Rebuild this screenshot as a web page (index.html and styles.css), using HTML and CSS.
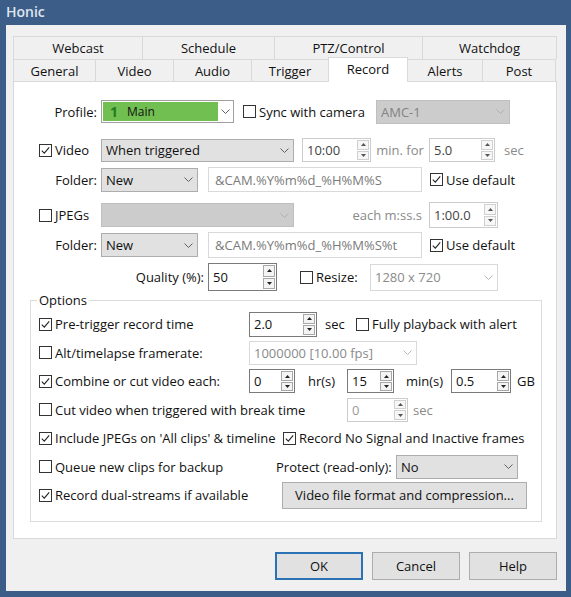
FILE: index.html
```html
<!DOCTYPE html>
<html>
<head>
<meta charset="utf-8">
<link rel="stylesheet" href="styles.css">
</head>
<body>
<div class="win">
  <div class="title">Honic</div>
  <div class="client">
    <div class="tabrow r1">
      <div class="tab t-webcast">Webcast</div>
      <div class="tab t-schedule">Schedule</div>
      <div class="tab t-ptz">PTZ/Control</div>
      <div class="tab t-watchdog last">Watchdog</div>
    </div>
    <div class="tabrow r2">
      <div class="tab t-general">General</div>
      <div class="tab t-video">Video</div>
      <div class="tab t-audio">Audio</div>
      <div class="tab t-trigger">Trigger</div>
      <div class="tab t-record sel">Record</div>
      <div class="tab t-alerts">Alerts</div>
      <div class="tab t-post last">Post</div>
    </div>
    <div class="panel">
      <div class="row r-profile">
        <div class="lab lab-top">Profile:</div>
        <div class="combo profile-combo">
          <span class="pc-fill"><span class="pc-num">1</span>Main</span>
          <span class="arr"><svg width="9" height="5" viewBox="0 0 9 5"><path d="M0.5 0.5 L4.5 4.5 L8.5 0.5" fill="none" stroke="#606060"/></svg></span>
        </div>
        <label class="chk sync"><span class="cb"></span>Sync with camera</label>
        <div class="combo dis-list amc"><span class="val">AMC-1</span><span class="arr"><svg width="9" height="5" viewBox="0 0 9 5"><path d="M0.5 0.5 L4.5 4.5 L8.5 0.5" fill="none" stroke="#b0b0b0"/></svg></span></div>
      </div>

      <div class="row r-video">
        <label class="chk lab-chk"><span class="cb"><svg width="11" height="11" viewBox="0 0 11 11"><path d="M1.8 5.6 L4.3 8.1 L9.2 2.4" fill="none" stroke="#222" stroke-width="1.1"/></svg></span>Video</label>
        <div class="combo list video-mode"><span class="val">When triggered</span><span class="arr"><svg width="9" height="5" viewBox="0 0 9 5"><path d="M0.5 0.5 L4.5 4.5 L8.5 0.5" fill="none" stroke="#606060"/></svg></span></div>
        <div class="spin spin-dis sp-time"><span class="val">10:00</span><span class="btns"><span class="sb"><svg width="5" height="3" viewBox="0 0 5 3"><polygon points="0,3 2.5,0 5,3" fill="#555"/></svg></span><span class="sb"><svg width="5" height="3" viewBox="0 0 5 3"><polygon points="0,0 5,0 2.5,3" fill="#555"/></svg></span></span></div>
        <span class="gray u-minfor">min. for</span>
        <div class="spin spin-dis sp-sec"><span class="val">5.0</span><span class="btns"><span class="sb"><svg width="5" height="3" viewBox="0 0 5 3"><polygon points="0,3 2.5,0 5,3" fill="#555"/></svg></span><span class="sb"><svg width="5" height="3" viewBox="0 0 5 3"><polygon points="0,0 5,0 2.5,3" fill="#555"/></svg></span></span></div>
        <span class="gray u-sec1">sec</span>
      </div>

      <div class="row r-folder1">
        <div class="lab lab-top">Folder:</div>
        <div class="combo list folder-combo"><span class="val">New</span><span class="arr"><svg width="9" height="5" viewBox="0 0 9 5"><path d="M0.5 0.5 L4.5 4.5 L8.5 0.5" fill="none" stroke="#606060"/></svg></span></div>
        <div class="field path">&amp;CAM.%Y%m%d_%H%M%S</div>
        <label class="chk usedef"><span class="cb"><svg width="11" height="11" viewBox="0 0 11 11"><path d="M1.8 5.6 L4.3 8.1 L9.2 2.4" fill="none" stroke="#222" stroke-width="1.1"/></svg></span>Use default</label>
      </div>

      <div class="row r-jpegs">
        <label class="chk lab-chk"><span class="cb"></span>JPEGs</label>
        <div class="combo dis-list jpeg-combo"><span class="val"></span><span class="arr"><svg width="9" height="5" viewBox="0 0 9 5"><path d="M0.5 0.5 L4.5 4.5 L8.5 0.5" fill="none" stroke="#b0b0b0"/></svg></span></div>
        <span class="gray u-each">each m:ss.s</span>
        <div class="spin spin-dis sp-each"><span class="val">1:00.0</span><span class="btns"><span class="sb"><svg width="5" height="3" viewBox="0 0 5 3"><polygon points="0,3 2.5,0 5,3" fill="#555"/></svg></span><span class="sb"><svg width="5" height="3" viewBox="0 0 5 3"><polygon points="0,0 5,0 2.5,3" fill="#555"/></svg></span></span></div>
      </div>

      <div class="row r-folder2">
        <div class="lab lab-top">Folder:</div>
        <div class="combo list folder-combo"><span class="val">New</span><span class="arr"><svg width="9" height="5" viewBox="0 0 9 5"><path d="M0.5 0.5 L4.5 4.5 L8.5 0.5" fill="none" stroke="#606060"/></svg></span></div>
        <div class="field path path2">&amp;CAM.%Y%m%d_%H%M%S%t</div>
        <label class="chk usedef"><span class="cb"><svg width="11" height="11" viewBox="0 0 11 11"><path d="M1.8 5.6 L4.3 8.1 L9.2 2.4" fill="none" stroke="#222" stroke-width="1.1"/></svg></span>Use default</label>
      </div>

      <div class="row r-quality">
        <div class="lab lab-quality">Quality (%):</div>
        <div class="spin sp-quality"><span class="val">50</span><span class="btns"><span class="sb"><svg width="5" height="3" viewBox="0 0 5 3"><polygon points="0,3 2.5,0 5,3" fill="#222"/></svg></span><span class="sb"><svg width="5" height="3" viewBox="0 0 5 3"><polygon points="0,0 5,0 2.5,3" fill="#222"/></svg></span></span></div>
        <label class="chk resize"><span class="cb"></span>Resize:</label>
        <div class="combo dis-edit resize-combo"><span class="val">1280 x 720</span><span class="arr"><svg width="9" height="5" viewBox="0 0 9 5"><path d="M0.5 0.5 L4.5 4.5 L8.5 0.5" fill="none" stroke="#b8b8b8"/></svg></span></div>
      </div>

      <fieldset class="group">
        <legend>Options</legend>
        <div class="grow g-first">
          <label class="chk gcell gc-218"><span class="cb"><svg width="11" height="11" viewBox="0 0 11 11"><path d="M1.8 5.6 L4.3 8.1 L9.2 2.4" fill="none" stroke="#222" stroke-width="1.1"/></svg></span>Pre-trigger record time</label>
          <div class="spin sp-pre"><span class="val">2.0</span><span class="btns"><span class="sb"><svg width="5" height="3" viewBox="0 0 5 3"><polygon points="0,3 2.5,0 5,3" fill="#222"/></svg></span><span class="sb"><svg width="5" height="3" viewBox="0 0 5 3"><polygon points="0,0 5,0 2.5,3" fill="#222"/></svg></span></span></div>
          <span class="u-presec">sec</span>
          <label class="chk"><span class="cb"></span>Fully playback with alert</label>
        </div>
        <div class="grow">
          <label class="chk gcell gc-218"><span class="cb"></span>Alt/timelapse framerate:</label>
          <div class="combo dis-edit alt-combo"><span class="val">1000000 [10.00 fps]</span><span class="arr"><svg width="9" height="5" viewBox="0 0 9 5"><path d="M0.5 0.5 L4.5 4.5 L8.5 0.5" fill="none" stroke="#b8b8b8"/></svg></span></div>
        </div>
        <div class="grow">
          <label class="chk gcell gc-218"><span class="cb"><svg width="11" height="11" viewBox="0 0 11 11"><path d="M1.8 5.6 L4.3 8.1 L9.2 2.4" fill="none" stroke="#222" stroke-width="1.1"/></svg></span>Combine or cut video each:</label>
          <div class="spin sp-hr"><span class="val">0</span><span class="btns"><span class="sb"><svg width="5" height="3" viewBox="0 0 5 3"><polygon points="0,3 2.5,0 5,3" fill="#222"/></svg></span><span class="sb"><svg width="5" height="3" viewBox="0 0 5 3"><polygon points="0,0 5,0 2.5,3" fill="#222"/></svg></span></span></div>
          <span class="u-hr">hr(s)</span>
          <div class="spin sp-min"><span class="val">15</span><span class="btns"><span class="sb"><svg width="5" height="3" viewBox="0 0 5 3"><polygon points="0,3 2.5,0 5,3" fill="#222"/></svg></span><span class="sb"><svg width="5" height="3" viewBox="0 0 5 3"><polygon points="0,0 5,0 2.5,3" fill="#222"/></svg></span></span></div>
          <span class="u-min">min(s)</span>
          <div class="spin sp-gb"><span class="val">0.5</span><span class="btns"><span class="sb"><svg width="5" height="3" viewBox="0 0 5 3"><polygon points="0,3 2.5,0 5,3" fill="#222"/></svg></span><span class="sb"><svg width="5" height="3" viewBox="0 0 5 3"><polygon points="0,0 5,0 2.5,3" fill="#222"/></svg></span></span></div>
          <span class="u-gb">GB</span>
        </div>
        <div class="grow">
          <label class="chk gcell gc-316"><span class="cb"></span>Cut video when triggered with break time</label>
          <div class="spin spin-dis sp-cut"><span class="val val-dis">0</span><span class="btns"><span class="sb"><svg width="5" height="3" viewBox="0 0 5 3"><polygon points="0,3 2.5,0 5,3" fill="#555"/></svg></span><span class="sb"><svg width="5" height="3" viewBox="0 0 5 3"><polygon points="0,0 5,0 2.5,3" fill="#555"/></svg></span></span></div>
          <span class="gray u-cutsec">sec</span>
        </div>
        <div class="grow">
          <label class="chk gcell gc-252"><span class="cb"><svg width="11" height="11" viewBox="0 0 11 11"><path d="M1.8 5.6 L4.3 8.1 L9.2 2.4" fill="none" stroke="#222" stroke-width="1.1"/></svg></span>Include JPEGs on 'All clips' &amp; timeline</label>
          <label class="chk"><span class="cb"><svg width="11" height="11" viewBox="0 0 11 11"><path d="M1.8 5.6 L4.3 8.1 L9.2 2.4" fill="none" stroke="#222" stroke-width="1.1"/></svg></span>Record No Signal and Inactive frames</label>
        </div>
        <div class="grow">
          <label class="chk gcell gc-245"><span class="cb"></span>Queue new clips for backup</label>
          <span class="u-protect">Protect (read-only):</span>
          <div class="combo list protect-combo"><span class="val">No</span><span class="arr"><svg width="9" height="5" viewBox="0 0 9 5"><path d="M0.5 0.5 L4.5 4.5 L8.5 0.5" fill="none" stroke="#606060"/></svg></span></div>
        </div>
        <div class="grow">
          <label class="chk gcell gc-251"><span class="cb"><svg width="11" height="11" viewBox="0 0 11 11"><path d="M1.8 5.6 L4.3 8.1 L9.2 2.4" fill="none" stroke="#222" stroke-width="1.1"/></svg></span>Record dual-streams if available</label>
          <div class="btn fmt-btn">Video file format and compression...</div>
        </div>
      </fieldset>
    </div>
    <div class="btnrow">
      <div class="btn dlg def">OK</div>
      <div class="btn dlg">Cancel</div>
      <div class="btn dlg">Help</div>
    </div>
  </div>
</div>
</body>
</html>
```
FILE: styles.css
```css
* { box-sizing: border-box; }
body {
  margin: 0;
  font-family: "Open Sans", "Noto Sans", sans-serif;
  font-size: 13px;
  color: #111;
}
.win {
  width: 571px;
  height: 597px;
  background: #3c5d87;
  display: flex;
  flex-direction: column;
  overflow: hidden;
}
.title {
  height: 25px;
  padding-left: 6px;
  line-height: 23px;
  font-weight: 600;
  font-size: 14px;
  color: #dfe5ee;
}
.client {
  margin: 0 5px 6px 6px;
  height: 566px;
  background: #f0f0f0;
  padding: 11px 9px 0 7px;
}

/* tabs */
.tabrow { display: flex; height: 23px; }
.tabrow.r2 { height: 22px; }
.tab {
  border-top: 1px solid #d9d9d9;
  border-left: 1px solid #d9d9d9;
  background: #f0f0f0;
  display: flex;
  align-items: center;
  justify-content: center;
  height: 100%;
}
.tab.last { border-right: 1px solid #d9d9d9; }
.t-webcast { width: 129px; }
.t-schedule { width: 132px; }
.t-ptz { width: 148px; }
.t-watchdog { width: 135px; }
.t-general { width: 82px; }
.t-video { width: 78px; }
.t-audio { width: 78px; }
.t-trigger { width: 77px; }
.t-record { width: 80px; }
.t-alerts { width: 75px; }
.t-post { width: 74px; }
.tab.sel {
  background: #fff;
  height: 25px;
  margin-top: -2px;
  margin-bottom: -1px;
  margin-right: -1px;
  border-top: 1px solid #d9d9d9;
  border-left: 1px solid #d9d9d9;
  border-right: 1px solid #d9d9d9;
  padding-bottom: 3px;
  position: relative;
  z-index: 1;
}

/* panel */
.panel {
  height: 458px;
  border: 1px solid #d9d9d9;
  background: #fff;
  padding-top: 17px;
}
.row { display: flex; align-items: center; }
.r-profile { height: 25px; }
.r-video { height: 24px; margin-top: 14px; }
.r-folder1 { height: 25px; margin-top: 5px; }
.r-jpegs { height: 26px; margin-top: 10px; }
.r-folder2 { height: 26px; margin-top: 4px; }
.r-quality { height: 28px; margin-top: 5px; }

.lab { text-align: right; padding-right: 4px; flex: none; }
.lab-top { width: 87px; }
.lab-quality { width: 194px; }
.lab-chk { width: 87px; padding-left: 25px; flex: none; }

/* checkbox */
.chk { display: flex; align-items: center; white-space: nowrap; }
.cb {
  width: 13px;
  height: 13px;
  border: 1px solid #333;
  background: #fff;
  margin-right: 3px;
  flex: none;
  display: flex;
  align-items: center;
  justify-content: center;
}
.cb svg { display: block; }

/* combos */
.combo {
  display: flex;
  align-items: center;
  border: 1px solid #adadad;
  background: #e1e1e1;
  padding-left: 4px;
  flex: none;
}
.combo .val { flex: 1; white-space: nowrap; overflow: hidden; }
.combo .arr {
  width: 17px;
  display: flex;
  justify-content: center;
  align-items: center;
}
.combo .arr svg { display: block; }
.dis-list { background: #cccccc; border-color: #bfbfbf; color: #838383; }
.dis-edit { background: #fff; border-color: #d9d9d9; color: #8a8a8a; }
.profile-combo {
  width: 133px;
  height: 23px;
  background: #fff;
  border-color: #a0a0a0;
  padding: 1px;
}
.pc-fill {
  width: 115px;
  height: 100%;
  background: #70bf50;
  display: flex;
  align-items: center;
  padding-left: 7px;
  font-size: 12px;
}
.pc-num {
  width: 17px;
  color: #247a24;
  font-weight: 700;
  font-size: 14px;
}
.profile-combo .arr { flex: 1; }
.sync { width: 133px; margin-left: 9px; }
.amc { width: 134px; height: 24px; }
.video-mode { width: 193px; height: 23px; }
.folder-combo { width: 97px; height: 24px; }
.jpeg-combo { width: 193px; height: 24px; }
.resize-combo { width: 128px; height: 27px; }
.alt-combo { width: 168px; height: 24px; }
.protect-combo { width: 122px; height: 24px; }

/* fields */
.field {
  border: 1px solid #d9d9d9;
  background: #fff;
  display: flex;
  align-items: center;
  padding-left: 6px;
  color: #7a7a7a;
  flex: none;
  white-space: nowrap;
}
.path { width: 214px; height: 25px; margin-left: 10px; }
.path2 { height: 26px; }
.usedef { margin-left: 8px; }

/* spins */
.spin {
  display: flex;
  border: 1px solid #7a7a7a;
  background: #fff;
  flex: none;
}
.spin .val {
  flex: 1;
  display: flex;
  align-items: center;
  padding-left: 4px;
}
.spin .btns {
  width: 13px;
  display: flex;
  flex-direction: column;
  padding: 1px 1px 1px 0;
  gap: 1px;
}
.spin .sb {
  flex: 1;
  border: 1px solid #a8a8a8;
  background: #f4f4f4;
  display: flex;
  align-items: center;
  justify-content: center;
}
.spin .sb svg { display: block; }
.spin-dis { border-color: #cccccc; color: #444; }
.spin-dis .sb { border-color: #d0d0d0; background: #f7f7f7; }
.val-dis { color: #9a9a9a; }
.sp-time { width: 69px; height: 24px; margin-left: 8px; }
.sp-sec { width: 66px; height: 24px; }
.sp-each { width: 69px; height: 26px; }
.sp-quality { width: 69px; height: 28px; }
.sp-pre { width: 68px; height: 25px; }
.sp-hr { width: 46px; height: 24px; }
.sp-min { width: 47px; height: 24px; }
.sp-gb { width: 60px; height: 24px; }
.sp-cut { width: 61px; height: 24px; }

.gray { color: #8a8a8a; white-space: nowrap; }
.u-minfor { width: 58px; text-align: center; flex: none; }
.u-sec1 { margin-left: 9px; }
.u-each { width: 135px; text-align: right; padding-right: 7px; flex: none; }
.resize { width: 70px; margin-left: 23px; flex: none; }

/* group */
.group {
  margin: 0 0 0 16px;
  width: 512px;
  border: 1px solid #dcdcdc;
  padding: 0 0 11px 0;
  min-width: 0;
}
.group legend {
  margin-left: 6px;
  padding: 0 2px;
  line-height: 18px;
}
.grow { display: flex; align-items: center; height: 28.5px; }
.g-first { margin-top: 1px; }
.gcell { padding-left: 8px; flex: none; }
.gc-218 { width: 218px; }
.gc-316 { width: 316px; }
.gc-252 { width: 252px; }
.gc-245 { width: 245px; }
.gc-251 { width: 251px; }
.u-presec { width: 39px; padding-left: 8px; flex: none; }
.u-hr { width: 52px; padding-left: 13px; flex: none; }
.u-min { width: 57px; padding-left: 12px; flex: none; }
.u-gb { margin-left: 6px; }
.u-cutsec { margin-left: 5px; }
.u-protect { width: 120px; flex: none; white-space: nowrap; }

/* buttons */
.btn {
  border: 1px solid #adadad;
  background: #e1e1e1;
  display: flex;
  align-items: center;
  justify-content: center;
  flex: none;
  white-space: nowrap;
}
.fmt-btn { width: 245px; height: 27px; }
.btnrow {
  display: flex;
  justify-content: flex-end;
  gap: 9px;
  margin-top: 13px;
}
.dlg { width: 88px; height: 28px; }
.def { border: 2px solid #2a72b5; }
```
